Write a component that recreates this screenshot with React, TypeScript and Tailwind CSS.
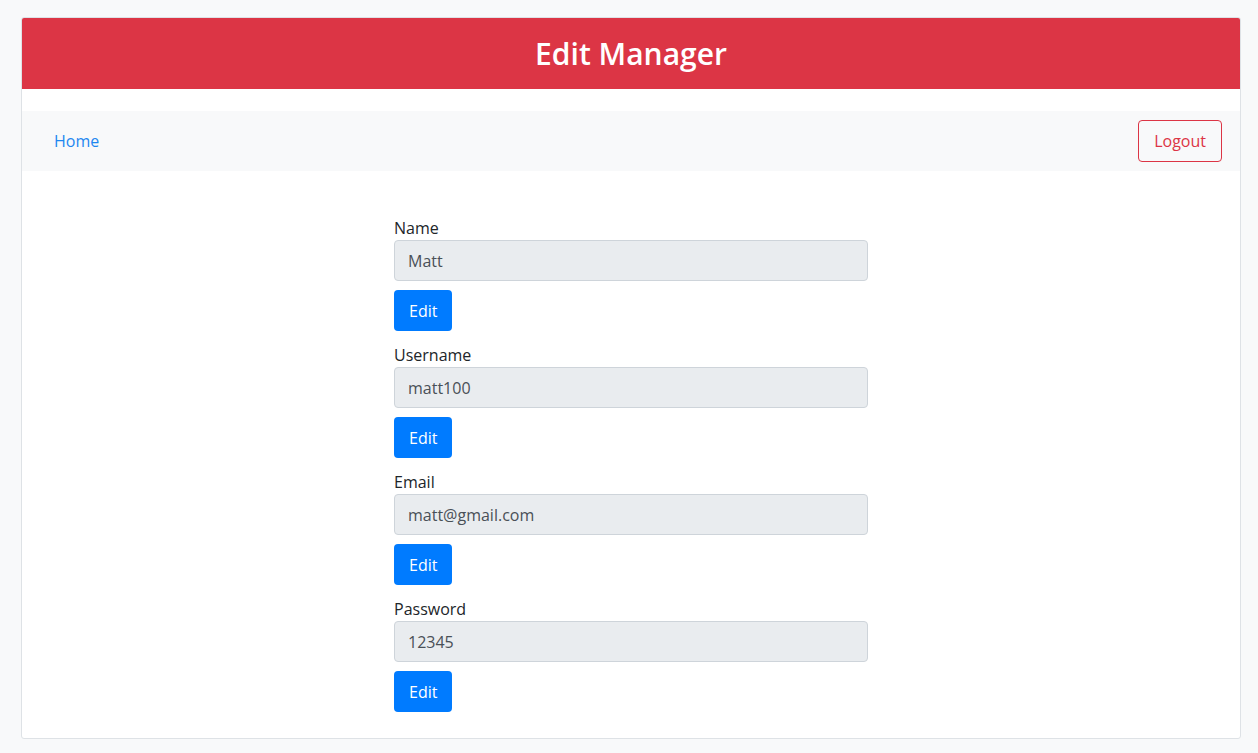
const fields = [
  { label: "Name", value: "Matt" },
  { label: "Username", value: "matt100" },
  { label: "Email", value: "matt@gmail.com" },
  { label: "Password", value: "12345" },
];

export default function App() {
  return (
    <div
      className="min-h-screen bg-[#f8f9fa] pl-[21px] pr-[17px] pt-[17px] pb-[15px]"
      style={{ fontFamily: '"Open Sans", "Noto Sans", sans-serif' }}
    >
      <div className="bg-white border border-[#dee2e6] rounded-[3px] overflow-hidden">
        <header className="h-[71px] bg-[#dc3545] flex items-center justify-center">
          <h1 className="text-[30px] font-semibold text-white leading-none">Edit Manager</h1>
        </header>

        <nav className="mt-[22px] h-[60px] bg-[#f8f9fa] flex items-center justify-between pl-[32px] pr-[18px]">
          <a href="#" className="text-[16px] text-[#1e87f0]">Home</a>
          <button className="h-[42px] px-[15px] border border-[#dc3545] rounded-[4px] text-[#dc3545] text-[16px]">
            Logout
          </button>
        </nav>

        <form className="w-[474px] mx-auto pt-[45px] pb-[14px] text-[16px]">
          {fields.map((f) => (
            <div key={f.label} className="flex flex-col items-start mb-[12px]">
              <label className="leading-[24px] text-[#212529]">{f.label}</label>
              <input
                readOnly
                value={f.value}
                className="w-full h-[41px] px-[13px] bg-[#e9ecef] border border-[#ced4da] rounded-[4px] text-[#495057] outline-none"
              />
              <button
                type="button"
                className="mt-[9px] h-[41px] px-[15px] bg-[#007bff] rounded-[4px] text-white"
              >
                Edit
              </button>
            </div>
          ))}
        </form>
      </div>
    </div>
  );
}
